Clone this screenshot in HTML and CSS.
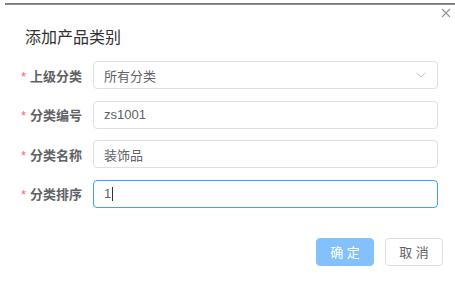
FILE: index.html
```html
<!DOCTYPE html>
<html lang="zh-CN">
<head>
  <meta charset="UTF-8">
  <title>添加产品类别</title>
  <link rel="stylesheet" href="styles.css">
</head>
<body>
  <div class="topline"></div>

  <div class="dialog">
    <button class="close" aria-label="关闭">
      <svg width="10" height="10" viewBox="0 0 10 10">
        <path d="M1 1L9 9M9 1L1 9" stroke="#909399" stroke-width="1.1" fill="none"/>
      </svg>
    </button>

    <div class="title">添加产品类别</div>

    <div class="form">
      <div class="row">
        <label class="label"><span class="star">*</span>上级分类</label>
        <div class="field select">
          <span>所有分类</span>
          <svg class="arrow" width="10" height="6" viewBox="0 0 10 6">
            <path d="M0.5 0.8L5 5L9.5 0.8" stroke="#c0c4cc" stroke-width="1" fill="none"/>
          </svg>
        </div>
      </div>
      <div class="row">
        <label class="label"><span class="star">*</span>分类编号</label>
        <div class="field">zs1001</div>
      </div>
      <div class="row">
        <label class="label"><span class="star">*</span>分类名称</label>
        <div class="field">装饰品</div>
      </div>
      <div class="row">
        <label class="label"><span class="star">*</span>分类排序</label>
        <div class="field focus">1<span class="caret"></span></div>
      </div>
    </div>

    <div class="footer">
      <button class="btn primary">确 定</button>
      <button class="btn">取 消</button>
    </div>
  </div>
</body>
</html>
```

FILE: styles.css
```css
body {
  margin: 0;
  background: #fff;
  font-family: "Liberation Sans", "Noto Sans CJK SC", sans-serif;
  color: #606266;
}

.topline {
  margin: 3px 0 0 5px;
  height: 2px;
  background: #8c8c8c;
  border-top: 1px solid #7a7a7a;
  box-sizing: border-box;
}

.dialog {
  position: relative;
  padding-top: 21px;
}

.close {
  position: absolute;
  top: 3px;
  right: 4px;
  padding: 0;
  border: none;
  background: none;
  width: 10px;
  height: 10px;
  display: flex;
}

.title {
  padding-left: 25px;
  font-size: 16px;
  line-height: 24px;
  color: #303133;
}

.form {
  margin-top: 11px;
  padding-right: 17px;
  display: flex;
  flex-direction: column;
  gap: 11.5px;
}

.row {
  display: flex;
  align-items: center;
  height: 28px;
}

.label {
  width: 82px;
  padding-right: 11px;
  text-align: right;
  font-size: 13px;
  font-weight: 700;
  color: #606266;
}

.star {
  color: #f56c6c;
  font-weight: 400;
  margin-right: 4px;
}

.field {
  flex: 1;
  height: 28px;
  box-sizing: border-box;
  border: 1px solid #dcdfe6;
  border-radius: 4px;
  padding: 0 10px;
  display: flex;
  align-items: center;
  font-size: 13px;
  color: #606266;
}

.select {
  justify-content: space-between;
}

.arrow {
  margin-right: 1px;
}

.focus {
  border-color: #409eff;
}

.caret {
  display: inline-block;
  width: 1px;
  height: 14px;
  margin-left: 1px;
  background: #303133;
}

.footer {
  display: flex;
  justify-content: flex-end;
  gap: 11px;
  margin-top: 30px;
  padding-right: 12px;
}

.btn {
  width: 58px;
  height: 28px;
  box-sizing: border-box;
  border: 1px solid #dcdfe6;
  border-radius: 4px;
  background: #fff;
  font-family: inherit;
  font-size: 13px;
  color: #606266;
  padding: 0;
}

.btn.primary {
  background: #84c0fc;
  border-color: #84c0fc;
  color: #fff;
}
```
